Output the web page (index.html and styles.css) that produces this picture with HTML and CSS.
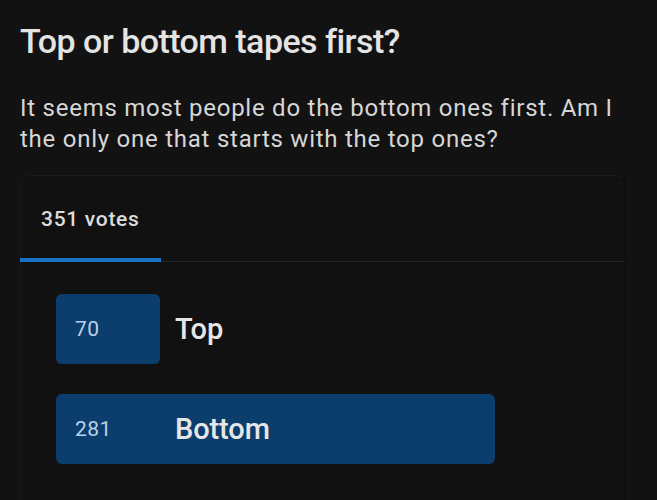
FILE: index.html
```html
<!DOCTYPE html>
<html lang="en">
<head>
    <meta charset="UTF-8">
    <meta name="viewport" content="width=device-width, initial-scale=1.0">
    <title>Top or bottom tapes first?</title>
    <link rel="stylesheet" href="styles.css">
</head>
<body>
    <div class="post">
        <h1 class="post-title">Top or bottom tapes first?</h1>
        <p class="post-body">It seems most people do the bottom ones first. Am I the only one that starts with the top ones?</p>

        <div class="poll">
            <div class="poll-tabs">
                <div class="poll-tab active">351 votes</div>
            </div>
            <div class="poll-options">
                <div class="option">
                    <div class="option-fill" style="width: 19%"></div>
                    <span class="option-count">70</span>
                    <span class="option-label">Top</span>
                </div>
                <div class="option">
                    <div class="option-fill" style="width: 80%"></div>
                    <span class="option-count">281</span>
                    <span class="option-label">Bottom</span>
                </div>
            </div>
        </div>
    </div>
</body>
</html>
```

FILE: styles.css
```css
body {
    margin: 0;
    background: #121212;
    font-family: Roboto, "Liberation Sans", sans-serif;
    color: #e2e2e2;
}
.post {
    padding: 21px 31px 0 20px;
}
.post-title {
    margin: 0;
    font-size: 34px;
    line-height: 40px;
    font-weight: 500;
    letter-spacing: -0.55px;
    color: #e4e4e4;
}
.post-body {
    margin: 32px 0 20px;
    font-size: 24px;
    line-height: 31px;
    letter-spacing: 0.75px;
    color: #d6d6d6;
}
.poll {
    background: #111111;
    border: 1px solid #1b1b1b;
    border-right-color: #0a0a0a;
    border-bottom: none;
    border-radius: 10px 10px 0 0;
    height: 330px;
}
.poll-tabs {
    display: flex;
    border-bottom: 1px solid #232323;
}
.poll-tab {
    width: 120px;
    padding: 31px 0 27px 21px;
    margin-left: -1px;
    font-size: 21px;
    line-height: 24px;
    font-weight: 500;
    letter-spacing: 0.7px;
    color: #dcdcdc;
    border-bottom: 4px solid #1a72c6;
    margin-bottom: -1px;
}
.poll-options {
    display: flex;
    flex-direction: column;
    gap: 30px;
    padding: 32px 20px 0 35px;
}
.option {
    position: relative;
    display: flex;
    align-items: center;
    height: 70px;
}
.option-fill {
    position: absolute;
    left: 0;
    top: 0;
    bottom: 0;
    background: #0b3e6d;
    border-radius: 6px;
}
.option-count {
    position: relative;
    width: 119px;
    padding-left: 19px;
    box-sizing: border-box;
    font-size: 21px;
    letter-spacing: 0.4px;
    color: #b9d2ea;
}
.option-label {
    position: relative;
    font-size: 29px;
    font-weight: 500;
    letter-spacing: -0.1px;
    color: #e6e6e6;
}
```
